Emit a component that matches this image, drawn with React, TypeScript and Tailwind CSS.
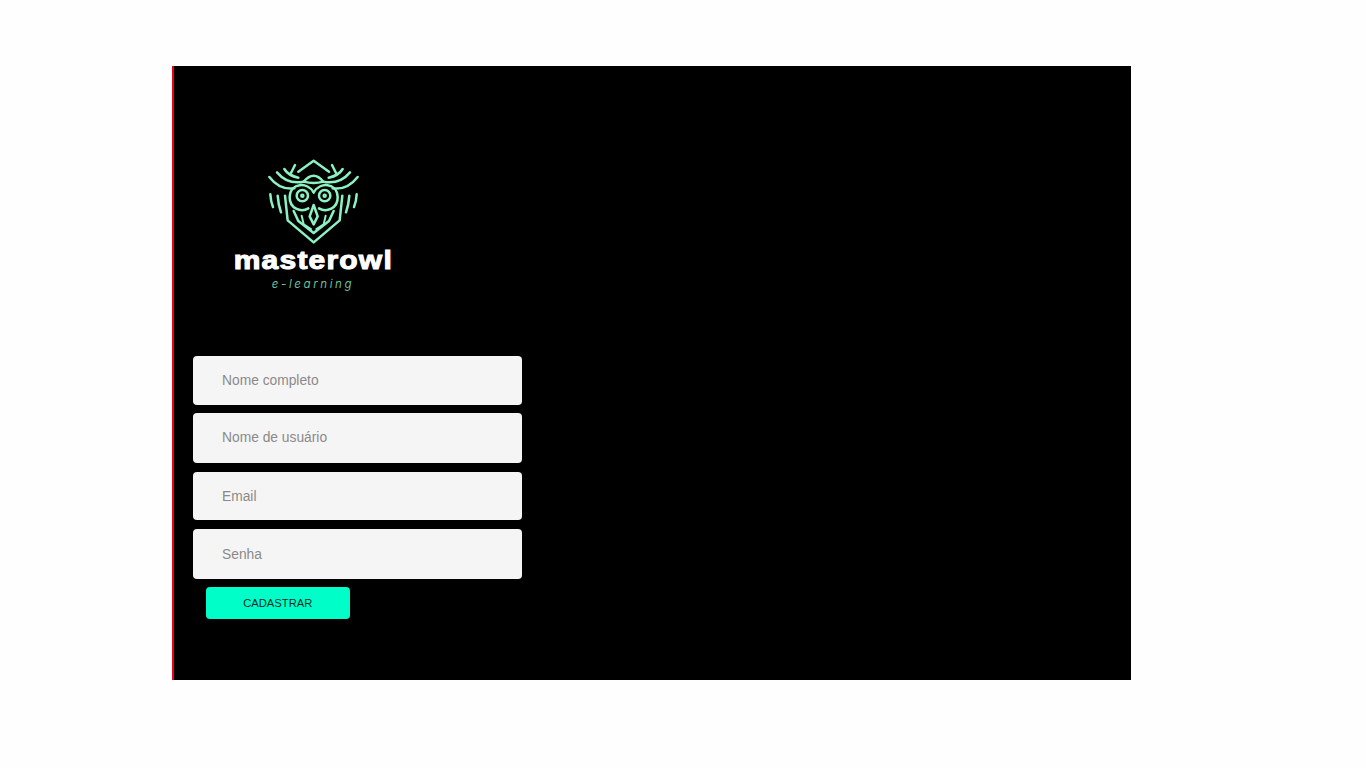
const fields = [
  { placeholder: "Nome completo", type: "text", h: "h-[49px]", mb: "mb-[8px]" },
  { placeholder: "Nome de usuário", type: "text", h: "h-[50px] pb-[2px]", mb: "mb-[9px]" },
  { placeholder: "Email", type: "email", h: "h-[48px]", mb: "mb-[9px]" },
  { placeholder: "Senha", type: "password", h: "h-[50px]", mb: "mb-[8px]" },
];

function Owl() {
  return (
    <svg
      viewBox="0 0 315 276"
      className="w-[105px] h-[92px] shrink-0"
      fill="none"
      stroke="#8df2c2"
      strokeWidth="7.5"
      strokeLinecap="round"
      strokeLinejoin="round"
    >
      {/* top chevron */}
      <path d="M112 50 L158 17 L204 50" />
      {/* antlers */}
      <path d="M70 42 Q82 62 112 68 M102 30 L90 54" />
      <path d="M245 42 Q233 62 203 68 M213 30 L225 54" />
      {/* crown arcs */}
      <path d="M25 66 Q56 106 100 100" />
      <path d="M290 66 Q259 106 215 100" />
      <path d="M48 52 Q80 90 128 80" />
      <path d="M267 52 Q235 90 187 80" />
      <path d="M128 80 Q158 44 187 80 Q158 88 128 80 Z" />
      {/* head */}
      <path d="M158 112 C140 80 88 82 86 126 C85 160 120 174 142 160" />
      <path d="M158 112 C176 80 228 82 230 126 C231 160 196 174 174 160" />
      {/* eyes */}
      <circle cx="124" cy="122" r="17" />
      <circle cx="124" cy="122" r="3" />
      <circle cx="191" cy="122" r="17" />
      <circle cx="191" cy="122" r="3" />
      {/* beak */}
      <path d="M158 150 L146 184 L158 208 L170 184 Z" />
      {/* inner wings */}
      <path d="M98 168 L112 198 L158 234 L204 198 L218 168" />
      <path d="M122 182 L128 208 L150 222 M194 182 L188 208 L166 222" strokeWidth="6" />
      {/* lower hex */}
      <path d="M72 122 L80 196 L158 262 L236 196 L244 122" />
      {/* side feathers */}
      <path d="M28 118 Q29 138 36 156" />
      <path d="M287 118 Q286 138 279 156" />
      <path d="M50 122 Q52 150 60 172" />
      <path d="M265 122 Q263 150 255 172" />
    </svg>
  );
}

export default function App() {
  return (
    <div
      className="min-h-[768px] bg-[#fefefe] pt-[66px] pl-[172px]"
      style={{ fontFamily: '"Liberation Sans", Arial, sans-serif' }}
    >
      <div className="w-[959px] h-[614px] bg-black border-l-2 border-l-[#e8001c] flex flex-col">
        <div className="ml-[60px] mt-[89px] flex flex-col items-center self-start w-[158px] shrink-0">
          <Owl />
          <div className="-mt-[2px] text-[25px] leading-[30px] font-bold text-white tracking-[1px] scale-x-[1.2] [-webkit-text-stroke:1px_white] whitespace-nowrap">
            masterowl
          </div>
          <div
            className="mt-[2px] text-[11.5px] leading-[14px] italic text-[#6fbf95] tracking-[2.6px] whitespace-nowrap"
            style={{ fontFamily: 'Inter, sans-serif' }}
          >
            e-learning
          </div>
        </div>
        <form className="mt-[65px] ml-[19px] w-[329px] flex flex-col">
          {fields.map((f) => (
            <input
              key={f.placeholder}
              type={f.type}
              placeholder={f.placeholder}
              className={`${f.h} ${f.mb} w-full rounded-[4px] bg-[#f5f5f5] pl-[29px] pr-4 text-[13.8px] outline-none placeholder:text-[#8a8a8a]`}
            />
          ))}
          <button
            type="button"
            className="ml-[13px] w-[143.5px] h-[32px] rounded-[4px] bg-[#00ffc8] text-[11.2px] text-[#0b2b26]"
          >
            CADASTRAR
          </button>
        </form>
      </div>
    </div>
  );
}
